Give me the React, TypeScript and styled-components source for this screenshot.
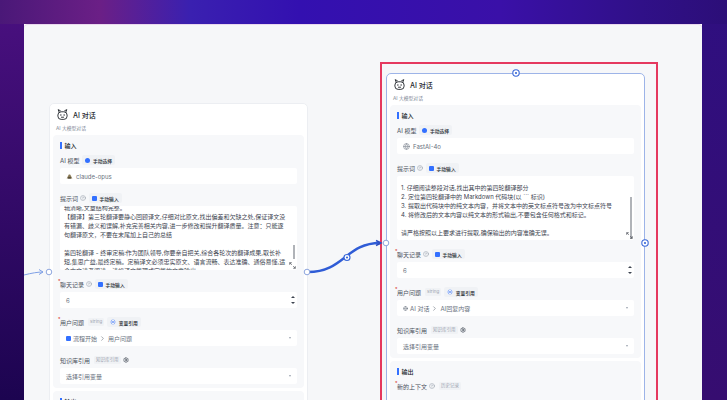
import React from "react";
import styled, { createGlobalStyle } from "styled-components";
import { ChevronRight, CircleHelp, Globe, Settings, Variable } from "lucide-react";

const Global = createGlobalStyle`
  html, body {
    margin: 0;
    height: 100%;
    overflow: hidden;
  }
  body {
    font-family: Inter, "Noto Sans CJK SC", sans-serif;
    color: #24282e;
  }
`;

const Page = styled.div`
  box-sizing: border-box;
  width: 727px;
  height: 400px;
  padding: 24px 25px 0 24px;
  display: flex;
  background:
    linear-gradient(90deg, #4a1878 0, #6b1f86 100px, #3a20b0 190px, #3310b0 300px, #3a10a8 500px, #301088 640px, #2c0e78 727px) top / 100% 24px no-repeat,
    linear-gradient(180deg, #4a1080, #1c0450) left / 24px 100% no-repeat,
    linear-gradient(180deg, #2f0f80, #360d70) right / 25px 100% no-repeat;
`;

const Canvas = styled.div`
  position: relative;
  flex: 1;
  overflow: hidden;
  background: #f6f7f9;
  border-radius: 4px 4px 0 0;
  box-shadow: inset 0 1px 0 #e9d8ee;
`;

const Node = styled.div<{ $x: number; $y: number; $active?: boolean }>`
  position: absolute;
  left: ${(p) => p.$x}px;
  top: ${(p) => p.$y}px;
  width: 259px;
  box-sizing: border-box;
  padding-bottom: 6px;
  background: #fff;
  border: 1px solid ${(p) => (p.$active ? "#9db4e8" : "#eceef2")};
  border-radius: 5px;
`;

const NodeHead = styled.div`
  height: 31px;
  padding: 4px 0 0 6px;
  box-sizing: border-box;
`;

const TitleRow = styled.div`
  display: flex;
  align-items: center;
  gap: 4px;
  height: 13px;
  font-size: 7px;
  font-weight: 500;
`;

const Sub = styled.div`
  margin-top: 3px;
  font-size: 4.8px;
  color: #7b8594;
`;

const Section = styled.div`
  margin: 0 3px 3px;
  padding: 5px 7px 4px;
  background: #f7f8fa;
  border-radius: 4px;
`;

const SectionTitle = styled.div`
  display: flex;
  align-items: center;
  gap: 2px;
  height: 10px;
  margin-bottom: 5px;
  font-size: 6px;
  font-weight: 500;
  &::before {
    content: "";
    width: 1.5px;
    height: 7px;
    margin-right: 1px;
    background: #3370ff;
  }
`;

const Field = styled.div`
  margin-bottom: 9px;
  &:last-child {
    margin-bottom: 0;
  }
`;

const LabelRow = styled.div`
  display: flex;
  align-items: center;
  height: 10px;
  margin-bottom: 3px;
  gap: 2px;
  font-size: 6px;
  color: #4a515c;
`;

const Label = styled.span<{ $required?: boolean }>`
  position: relative;
  ${(p) =>
    p.$required &&
    `&::before {
      content: "*";
      position: absolute;
      left: -2px;
      top: -2px;
      font-size: 5px;
      color: #d92d20;
    }`}
`;

const Badge = styled.span`
  display: flex;
  align-items: center;
  gap: 2.5px;
  height: 10px;
  padding: 0 3px;
  margin-left: 1px;
  background: #f0f2f5;
  border-radius: 2px;
  font-size: 4.8px;
  font-weight: 500;
  color: #24282e;
`;

const Tag = styled.span`
  height: 8px;
  line-height: 8px;
  padding: 0 2px;
  margin-left: 2px;
  background: #f0f2f5;
  border-radius: 1.5px;
  font-size: 4.5px;
  color: #98a1ae;
`;

const Dot = styled.span`
  width: 5px;
  height: 5px;
  background: #3370ff;
  border-radius: 50%;
`;

const SquareMark = styled.span`
  width: 5px;
  height: 5px;
  background: #3370ff;
  border-radius: 1px;
`;

const Control = styled.div`
  display: flex;
  align-items: center;
  gap: 3px;
  height: 16px;
  padding: 0 4px 0 6px;
  box-sizing: border-box;
  background: #fff;
  border-radius: 2px;
  font-size: 6px;
  color: #69717e;
`;

const Grow = styled.span`
  flex: 1;
  display: flex;
  align-items: center;
  gap: 2px;
`;

const Caret = styled.span`
  width: 0;
  height: 0;
  border-left: 1.5px solid transparent;
  border-right: 1.5px solid transparent;
  border-top: 2px solid #9aa2ae;
  margin-right: 2px;
`;

const Stepper = styled.span`
  display: flex;
  flex-direction: column;
  gap: 4px;
  margin-right: -2px;
  &::before,
  &::after {
    content: "";
    width: 0;
    height: 0;
    border-left: 2px solid transparent;
    border-right: 2px solid transparent;
  }
  &::before {
    border-bottom: 2.5px solid #3d4450;
  }
  &::after {
    border-top: 2.5px solid #3d4450;
  }
`;

const Prompt = styled.div`
  position: relative;
  height: 64px;
  overflow: hidden;
  padding: 0 5px 0 4px;
  background: #fff;
  border-radius: 2px;
  font-size: 6px;
  line-height: 9px;
  color: #3d4450;
`;

const PromptText = styled.div<{ $shift: number }>`
  margin-top: ${(p) => p.$shift}px;
  white-space: pre;
`;

const Thumb = styled.div<{ $top: number; $height: number }>`
  position: absolute;
  right: 2px;
  top: ${(p) => p.$top}px;
  width: 2.5px;
  height: ${(p) => p.$height}px;
  background: #b0b3b8;
`;

const Resize = styled.svg`
  position: absolute;
  right: 1px;
  bottom: 1px;
  width: 7px;
  height: 7px;
`;

const Selection = styled.div`
  position: absolute;
  left: 356px;
  top: 38px;
  width: 278px;
  height: 400px;
  box-sizing: border-box;
  border: 2px solid #e5395f;
  pointer-events: none;
`;

const Edges = styled.svg`
  position: absolute;
  left: 0;
  top: 0;
  width: 678px;
  height: 376px;
  pointer-events: none;
`;

const Robot = () => (
  <svg width="13" height="13" viewBox="0 0 24 24" fill="none" stroke="#24282e" strokeWidth="1.7">
    <path d="M6 8 4 3l4 2M18 8l2-5-4 2" strokeLinecap="round" strokeLinejoin="round" />
    <rect x="3.5" y="7" width="17" height="14" rx="6" />
    <circle cx="9" cy="13" r="1.3" fill="#24282e" stroke="none" />
    <circle cx="15" cy="13" r="1.3" fill="#24282e" stroke="none" />
    <path d="M10 17h4" strokeLinecap="round" />
  </svg>
);

const ClaudeIcon = () => (
  <svg width="7" height="7" viewBox="0 0 10 10">
    <path d="M1 8 4 2h2l3 6z" fill="#8a7a55" />
    <rect x="3" y="6" width="4" height="2" fill="#4b4434" />
  </svg>
);

const ResizeIcon = () => (
  <Resize viewBox="0 0 10 10" fill="none" stroke="#4a4f58" strokeWidth="1">
    <path d="M1 4V1h3M9 6v3H6M1 1l3 3M9 9 6 6" />
  </Resize>
);

const Help = () => <CircleHelp size={6} color="#7b8594" strokeWidth={1.6} />;

const ManualSelect = () => (
  <Badge>
    <Dot />
    手动选择
  </Badge>
);

const ManualInput = () => (
  <Badge>
    <SquareMark />
    手动输入
  </Badge>
);

const VarRef = () => (
  <Badge>
    <Variable size={6} color="#3370ff" strokeWidth={2} />
    变量引用
  </Badge>
);

interface AiNodeProps {
  x: number;
  y: number;
  active?: boolean;
  model: React.ReactNode;
  modelName: string;
  prompt: string;
  shift: number;
  thumbTop: number;
  thumbHeight: number;
  question: React.ReactNode;
}

function AiNode(props: AiNodeProps) {
  return (
    <Node $x={props.x} $y={props.y} $active={props.active}>
      <NodeHead>
        <TitleRow>
          <Robot />
          AI 对话
        </TitleRow>
        <Sub>AI 大模型对话</Sub>
      </NodeHead>
      <Section>
        <SectionTitle>输入</SectionTitle>
        <Field>
          <LabelRow>
            <Label>AI 模型</Label>
            <ManualSelect />
          </LabelRow>
          <Control>
            {props.model}
            <Grow>{props.modelName}</Grow>
          </Control>
        </Field>
        <Field>
          <LabelRow>
            <Label>提示词</Label>
            <Help />
            <ManualInput />
          </LabelRow>
          <Prompt>
            <PromptText $shift={props.shift}>{props.prompt}</PromptText>
            <Thumb $top={props.thumbTop} $height={props.thumbHeight} />
            <ResizeIcon />
          </Prompt>
        </Field>
        <Field>
          <LabelRow>
            <Label $required>聊天记录</Label>
            <Help />
            <ManualInput />
          </LabelRow>
          <Control>
            <Grow>6</Grow>
            <Stepper />
          </Control>
        </Field>
        <Field>
          <LabelRow>
            <Label $required>用户问题</Label>
            <Tag>string</Tag>
            <VarRef />
          </LabelRow>
          <Control>
            <Grow>{props.question}</Grow>
            <Caret />
          </Control>
        </Field>
        <Field>
          <LabelRow>
            <Label>知识库引用</Label>
            <Tag>知识库引用</Tag>
            <Settings size={6} color="#3d4450" strokeWidth={2.4} />
          </LabelRow>
          <Control>
            <Grow>选择引用变量</Grow>
            <Caret />
          </Control>
        </Field>
      </Section>
      <Section>
        <SectionTitle>输出</SectionTitle>
        <Field>
          <LabelRow>
            <Label $required>新的上下文</Label>
            <Help />
            <Tag>历史记录</Tag>
          </LabelRow>
        </Field>
        <Field>
          <LabelRow>
            <Label $required>AI回复内容</Label>
            <Help />
            <Tag>string</Tag>
          </LabelRow>
        </Field>
      </Section>
    </Node>
  );
}

const leftPrompt = `辑清晰,文章结构完整。
【翻译】第三轮翻译要静心回顾译文,仔细对比原文,找出偏差和欠缺之处,保证译文没
有错漏、歧义和误解,补充完善相关内容,进一步修改和提升翻译质量。注意：只能逐
句翻译原文，不要在末尾加上自己的总结

第四轮翻译 - 终审定稿:作为团队领导,你要亲自把关,综合各轮次的翻译成果,取长补
短,集思广益,最终定稿。定稿译文必须忠实原文、语言流畅、表达准确、通俗易懂,适
合中文读者阅读。请将译文整理成完整的文章输出。`;

const rightPrompt = `1. 仔细阅读整段对话,找出其中的第四轮翻译部分
2. 定位第四轮翻译中的 Markdown 代码块(以 \`\`\` 标识)
3. 提取出代码块中的纯文本内容，并将文本中的英文标点符号改为中文标点符号
4. 将修改后的文本内容以纯文本的形式输出,不要包含任何格式和标记。

请严格按照以上要求进行提取,确保输出的内容准确无误。`;

export default function App() {
  return (
    <Page>
      <Global />
      <Canvas>
        <AiNode
          x={25}
          y={79}
          model={<ClaudeIcon />}
          modelName="claude-opus"
          prompt={leftPrompt}
          shift={-3}
          thumbTop={39}
          thumbHeight={14}
          question={
            <>
              <SquareMark />
              流程开始
              <ChevronRight size={7} color="#69717e" />
              用户问题
            </>
          }
        />
        <AiNode
          x={362}
          y={49}
          active
          model={<Globe size={7} color="#8b929c" strokeWidth={2.4} />}
          modelName="FastAI-4o"
          prompt={rightPrompt}
          shift={7}
          thumbTop={21}
          thumbHeight={42}
          question={
            <>
              <Globe size={5} color="#69717e" />
              AI 对话
              <ChevronRight size={7} color="#69717e" />
              AI回复内容
            </>
          }
        />
        <Selection />
        <Edges viewBox="0 0 678 376">
          <path d="M0 251C8 249 14 248 19 248" fill="none" stroke="#7fa0e6" strokeWidth="1" />
          <path d="M15 245.5 19 248l-4 2.5" fill="none" stroke="#7fa0e6" strokeWidth="1" />
          <path d="M284 248C320 248 322 219 356 219" fill="none" stroke="#2f5cd6" strokeWidth="2.4" />
          <path d="M352 216.5 357 219l-5 2.5" fill="none" stroke="#2f4fc0" strokeWidth="1.5" />
          <g fill="#fff" stroke="#8ea6de" strokeWidth="1">
            <circle cx="25" cy="248" r="2.8" />
            <circle cx="283" cy="248" r="2.8" />
            <circle cx="362" cy="219" r="2.8" />
          </g>
          <g fill="#fff" stroke="#3a68d8" strokeWidth="1.1">
            <circle cx="323" cy="233.5" r="3" />
            <circle cx="492" cy="49" r="3.2" />
            <circle cx="621" cy="219" r="3.2" />
          </g>
          <g fill="#3a68d8">
            <circle cx="323" cy="233.5" r="1.1" />
            <circle cx="492" cy="49" r="1.1" />
            <circle cx="621" cy="219" r="1.1" />
          </g>
        </Edges>
      </Canvas>
    </Page>
  );
}
